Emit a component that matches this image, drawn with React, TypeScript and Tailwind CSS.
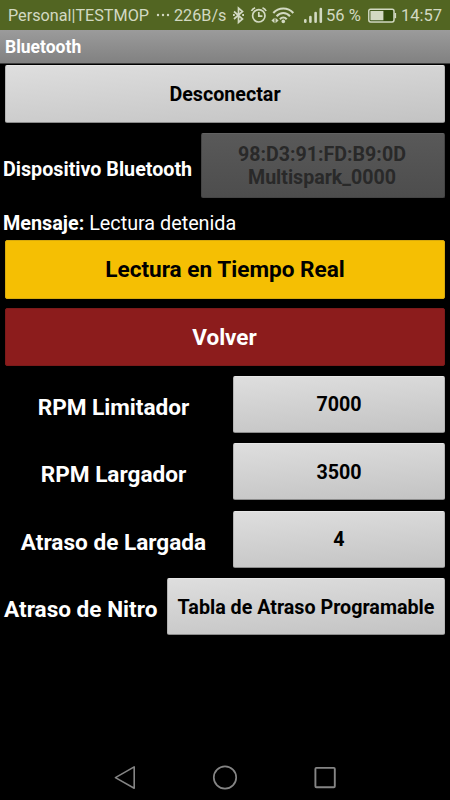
import { ReactNode } from 'react';

interface ParamRow {
  label: string;
  value: string;
}

const rows: ParamRow[] = [
  { label: 'RPM Limitador', value: '7000' },
  { label: 'RPM Largador', value: '3500' },
  { label: 'Atraso de Largada', value: '4' },
];

function GreyButton({ children, className = '' }: { children: ReactNode; className?: string }) {
  return (
    <button
      className={`rounded-[2px] border border-t-[#e6e6e6] border-x-[#b4b4b4] border-b-[#8c8c8c] bg-linear-[176deg] from-[#dedede] to-[#c3c3c3] pt-[2px] text-center text-[19.7px] font-bold text-black ${className}`}
    >
      {children}
    </button>
  );
}

function StatusBar() {
  return (
    <div className="flex h-[30px] items-center bg-[#526522] pl-2 text-[16.5px] leading-[30px] whitespace-nowrap text-[#d2d9c2]">
      <span className="w-[148px] pt-px text-[16.2px]">Personal|TESTMOP</span>
      <svg className="w-[14px] shrink-0" height="30" viewBox="0 0 14 30" fill="currentColor">
        <circle cx="2" cy="15" r="1.2" />
        <circle cx="7" cy="15" r="1.2" />
        <circle cx="12" cy="15" r="1.2" />
      </svg>
      <span className="ml-1 w-[58px] pt-px text-[16.2px]">226B/s</span>
      {/* Bluetooth */}
      <svg className="w-[14px] shrink-0" height="30" viewBox="0 0 14 30" fill="none" stroke="currentColor" strokeWidth="1.7">
        <path d="M2 11.5l8.5 7.5-4 3.5V8l4 3.5L2 19" />
        <path d="M1 15h1.8M10.2 15h1.8" strokeWidth="2" />
      </svg>
      {/* Alarm */}
      <svg className="ml-[4px] w-[18px] shrink-0" height="30" viewBox="0 0 18 30" fill="none" stroke="currentColor" strokeWidth="1.7">
        <circle cx="8.8" cy="15.8" r="6.2" />
        <path d="M8.8 12v4.2h3.6M1.5 11q1-2.3 3.6-3.3M16.1 11q-1-2.3-3.6-3.3" />
      </svg>
      {/* Wifi with traffic arrows */}
      <svg className="ml-[3px] w-[24px] shrink-0" height="30" viewBox="0 0 24 30" fill="none" stroke="currentColor" strokeWidth="2.1">
        <path d="M2.3 13q4-4.5 10-4.5t10 4.5M5.6 16.2q2.8-3.2 6.7-3.2t6.7 3.2M8.9 19.2q1.5-1.7 3.4-1.7t3.4 1.7" />
        <path d="M.4 20.5l3.1-2.8v5.6zM7.6 20.5l-3.1-2.8v5.6z" fill="currentColor" stroke="none" />
        <circle cx="12.3" cy="21.4" r="1.8" fill="currentColor" stroke="none" />
      </svg>
      {/* Signal */}
      <svg className="ml-[8px] w-[20px] shrink-0" height="30" viewBox="0 0 20 30" fill="none" stroke="currentColor" strokeWidth="2.6" strokeLinecap="round">
        <path d="M2.3 20.3v1.4M7.4 17v4.7M12.6 13v8.7M17.8 9v12.7" />
      </svg>
      <span className="ml-[3px] w-[42px] pt-px text-[16.5px]">56 %</span>
      {/* Battery */}
      <svg className="w-[29px] shrink-0" height="30" viewBox="0 0 29 30" fill="none">
        <rect x="0.8" y="9.3" width="25.2" height="12.6" rx="1.8" fill="#324b0c" stroke="currentColor" strokeWidth="1.5" />
        <rect x="2.4" y="10.9" width="13" height="9.4" fill="currentColor" />
        <path d="M27.3 13v5.2" stroke="currentColor" strokeWidth="1.6" />
      </svg>
      <span className="ml-[4px] pt-px">14:57</span>
    </div>
  );
}

function NavBar() {
  return (
    <div className="mt-auto flex h-[46px] items-center justify-center gap-[72px] text-[#858585]">
      <svg width="28" height="28" viewBox="0 0 28 28" fill="none" stroke="currentColor" strokeWidth="1.6" strokeLinejoin="round">
        <path d="M23.2 3.9v21.4L4.4 14.6z" />
      </svg>
      <svg width="28" height="28" viewBox="0 0 28 28" fill="none" stroke="currentColor" strokeWidth="1.7">
        <circle cx="14" cy="14.5" r="11.2" />
      </svg>
      <svg width="28" height="28" viewBox="0 0 28 28" fill="none" stroke="currentColor" strokeWidth="1.9">
        <rect x="4.4" y="4.9" width="19.4" height="19.4" rx="1" />
      </svg>
    </div>
  );
}

export default function App() {
  return (
    <div className="flex h-[800px] w-[450px] flex-col overflow-hidden bg-black font-['Roboto',sans-serif] text-white">
      <StatusBar />
      <div className="h-[34px] border-b border-[#3c3c3c] bg-linear-to-b from-[#9b9b9b] to-[#818181] pl-[5px] text-[17.5px] leading-[34px] font-bold">
        Bluetooth
      </div>

      <div className="flex flex-col px-[5px] pt-px">
        <GreyButton className="h-[58px]">Desconectar</GreyButton>

        <div className="mt-[10px] -ml-[2px] flex h-[65px] justify-between">
          <span className="pt-[23px] text-[19.7px] leading-7 font-bold whitespace-nowrap">Dispositivo Bluetooth</span>
          <button
            disabled
            className="w-[244px] rounded-[2px] border border-[#444444] border-t-[#626262] bg-linear-to-b from-[#595959] to-[#4d4d4d] pt-px pr-[2px] text-[19.6px] leading-[23px] font-bold text-[#292929]"
          >
            98:D3:91:FD:B9:0D
            <br />
            Multispark_0000
          </button>
        </div>

        <p className="-ml-[2px] h-[42px] pt-[12px] text-[19.8px] leading-7">
          <b>Mensaje:</b> Lectura detenida
        </p>

        <button className="h-[59px] rounded-[2px] border border-[#d8aa0c] bg-[#f5bf03] pt-px text-[22.6px] font-bold text-black">
          Lectura en Tiempo Real
        </button>
        <button className="mt-[9px] h-[58px] rounded-[2px] border border-[#7c1a1a] bg-[#8c1c1c] pt-px pr-px text-[22.5px] font-bold text-white">
          Volver
        </button>

        {rows.map((row) => (
          <div key={row.label} className="mt-[9.5px] flex h-[58px]">
            <span className="mr-[11px] flex-1 pt-[18px] text-center text-[22.6px] leading-7 font-bold whitespace-nowrap">
              {row.label}
            </span>
            <GreyButton className="h-[57.3px] w-[212px]">{row.value}</GreyButton>
          </div>
        ))}

        <div className="mt-[9.5px] -ml-px flex h-[58px] justify-between">
          <span className="pt-[18px] text-[22.6px] leading-7 font-bold whitespace-nowrap">Atraso de Nitro</span>
          <GreyButton className="h-[57.3px] w-[278px] whitespace-nowrap">Tabla de Atraso Programable</GreyButton>
        </div>
      </div>

      <NavBar />
    </div>
  );
}
